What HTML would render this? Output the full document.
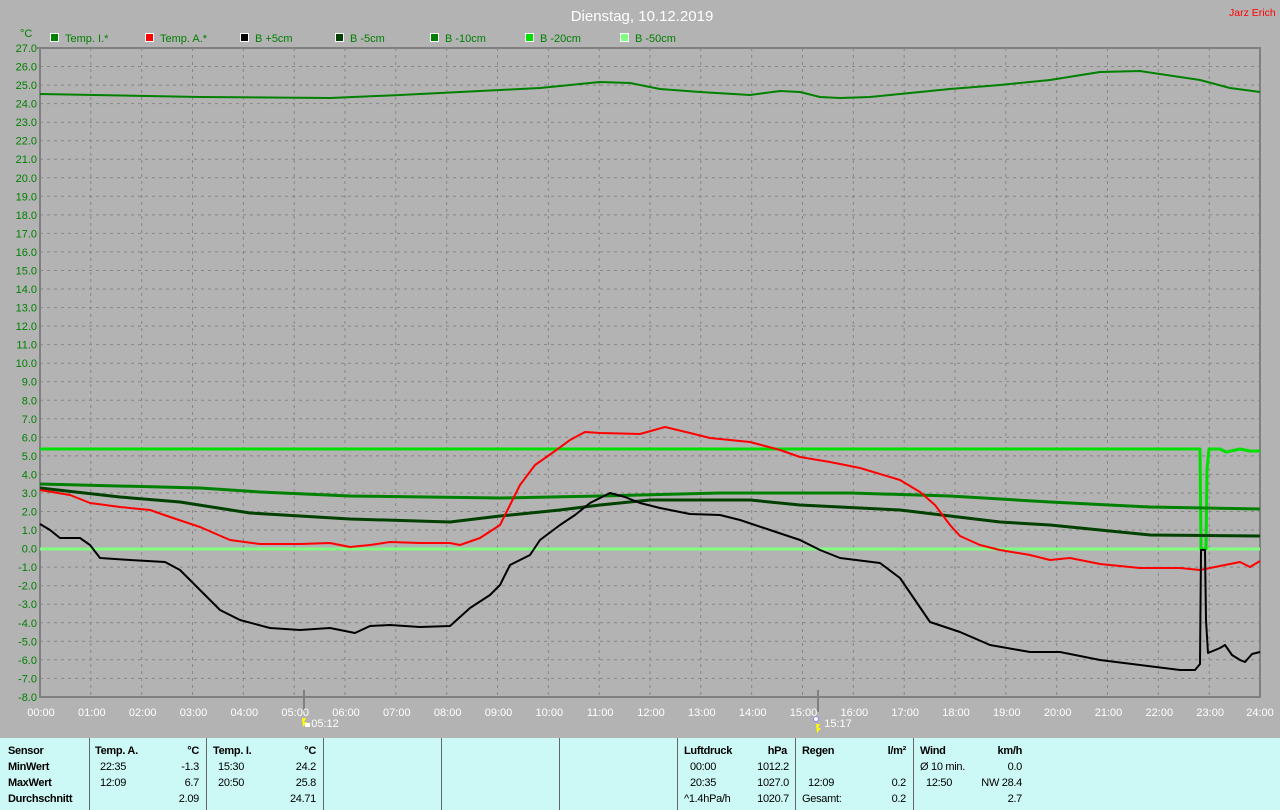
<!DOCTYPE html>
<html><head><meta charset="utf-8"><style>
html,body{margin:0;padding:0;width:1280px;height:810px;overflow:hidden;background:#b3b3b3;font-family:"Liberation Sans",sans-serif}
svg{position:absolute;left:0;top:0}
#tbl{position:absolute;left:0;top:738px;width:1280px;height:72px;background:#ccf9f5;font-size:11px;color:#000}
.d{position:absolute;top:0;width:1px;height:72px;background:#666}
.t{position:absolute;white-space:nowrap;letter-spacing:-0.3px}
.b{font-weight:bold}
</style></head><body>
<svg width="1280" height="738" font-family="Liberation Sans, sans-serif">
<text x="642" y="21" fill="#fff" font-size="15" text-anchor="middle">Dienstag, 10.12.2019</text>
<text x="1229" y="16" fill="#f00" font-size="10.5">Jarz Erich</text>
<text x="20" y="37" fill="#008000" font-size="11">°C</text>
<g font-size="11" fill="#008000">
<rect x="50.5" y="33.5" width="8" height="8" fill="#008000" stroke="#fff"/><text x="65" y="42">Temp. I.*</text>
<rect x="145.5" y="33.5" width="8" height="8" fill="#f00" stroke="#fff"/><text x="160" y="42">Temp. A.*</text>
<rect x="240.5" y="33.5" width="8" height="8" fill="#000" stroke="#fff"/><text x="255" y="42">B +5cm</text>
<rect x="335.5" y="33.5" width="8" height="8" fill="#004000" stroke="#fff"/><text x="350" y="42">B -5cm</text>
<rect x="430.5" y="33.5" width="8" height="8" fill="#008000" stroke="#fff"/><text x="445" y="42">B -10cm</text>
<rect x="525.5" y="33.5" width="8" height="8" fill="#00e000" stroke="#fff"/><text x="540" y="42">B -20cm</text>
<rect x="620.5" y="33.5" width="8" height="8" fill="#80ff80" stroke="#fff"/><text x="635" y="42">B -50cm</text>
</g>
<g stroke="#868686" stroke-width="1" stroke-dasharray="3,4" fill="none">
<path d="M40 66.5H1260M40 85.1H1260M40 103.6H1260M40 122.2H1260M40 140.7H1260M40 159.2H1260M40 177.8H1260M40 196.3H1260M40 214.9H1260M40 233.4H1260M40 251.9H1260M40 270.5H1260M40 289H1260M40 307.6H1260M40 326.1H1260M40 344.6H1260M40 363.2H1260M40 381.7H1260M40 400.3H1260M40 418.8H1260M40 437.3H1260M40 455.9H1260M40 474.4H1260M40 493H1260M40 511.5H1260M40 530H1260M40 548.6H1260M40 567.1H1260M40 585.7H1260M40 604.2H1260M40 622.8H1260M40 641.3H1260M40 659.8H1260M40 678.4H1260"/>
<path d="M90.8 48V697M141.7 48V697M192.5 48V697M243.3 48V697M294.2 48V697M345 48V697M395.8 48V697M446.7 48V697M497.5 48V697M548.3 48V697M599.2 48V697M650 48V697M700.8 48V697M751.7 48V697M802.5 48V697M853.3 48V697M904.2 48V697M955 48V697M1005.8 48V697M1056.7 48V697M1107.5 48V697M1158.3 48V697M1209.2 48V697"/>
</g>
<path d="M37 48H1260V697H40V48" stroke="#808080" stroke-width="2" fill="none"/>
<path d="M304 690V712M818 690V712" stroke="#808080" stroke-width="2"/>
<g font-size="11" fill="#008000" text-anchor="end">
<text x="37" y="52">27.0</text><text x="37" y="70.5">26.0</text><text x="37" y="89">25.0</text><text x="37" y="107.6">24.0</text><text x="37" y="126.2">23.0</text><text x="37" y="144.7">22.0</text><text x="37" y="163.2">21.0</text><text x="37" y="181.8">20.0</text><text x="37" y="200.3">19.0</text><text x="37" y="218.9">18.0</text><text x="37" y="237.4">17.0</text><text x="37" y="255.9">16.0</text><text x="37" y="274.5">15.0</text><text x="37" y="293">14.0</text><text x="37" y="311.6">13.0</text><text x="37" y="330.1">12.0</text><text x="37" y="348.6">11.0</text><text x="37" y="367.2">10.0</text><text x="37" y="385.7">9.0</text><text x="37" y="404.3">8.0</text><text x="37" y="422.8">7.0</text><text x="37" y="441.3">6.0</text><text x="37" y="459.9">5.0</text><text x="37" y="478.4">4.0</text><text x="37" y="497">3.0</text><text x="37" y="515.5">2.0</text><text x="37" y="534">1.0</text><text x="37" y="552.6">0.0</text><text x="37" y="571.1">-1.0</text><text x="37" y="589.7">-2.0</text><text x="37" y="608.2">-3.0</text><text x="37" y="626.8">-4.0</text><text x="37" y="645.3">-5.0</text><text x="37" y="663.8">-6.0</text><text x="37" y="682.4">-7.0</text><text x="37" y="701">-8.0</text>
</g>
<g font-size="11" fill="#fff" text-anchor="middle">
<text x="41" y="716">00:00</text><text x="91.8" y="716">01:00</text><text x="142.7" y="716">02:00</text><text x="193.5" y="716">03:00</text><text x="244.3" y="716">04:00</text><text x="295.2" y="716">05:00</text><text x="346" y="716">06:00</text><text x="396.8" y="716">07:00</text><text x="447.7" y="716">08:00</text><text x="498.5" y="716">09:00</text><text x="549.3" y="716">10:00</text><text x="600.2" y="716">11:00</text><text x="651" y="716">12:00</text><text x="701.8" y="716">13:00</text><text x="752.7" y="716">14:00</text><text x="803.5" y="716">15:00</text><text x="854.3" y="716">16:00</text><text x="905.2" y="716">17:00</text><text x="956" y="716">18:00</text><text x="1006.8" y="716">19:00</text><text x="1057.7" y="716">20:00</text><text x="1108.5" y="716">21:00</text><text x="1159.3" y="716">22:00</text><text x="1210.2" y="716">23:00</text><text x="1260" y="716">24:00</text>
<text x="325" y="727">05:12</text><text x="838" y="727">15:17</text>
</g>
<path d="M302 718l4 0-2 4 3 0-4 5z" fill="#ff0"/><rect x="305" y="723" width="5" height="4" fill="#fff"/>
<path d="M816 724l4 0-2 4 3 0-4 5z" fill="#ff0"/><circle cx="816" cy="719" r="2.5" fill="#fff" stroke="#88f"/>
<g fill="none" stroke-linejoin="round">
<polyline stroke="#80ff80" stroke-width="3" points="40,549 1260,549"/>
<polyline stroke="#00e000" stroke-width="3" points="40,449 1200,449 1201,549 1206,549 1207,470 1209,449 1220,449 1226,452 1240,449 1250,451 1260,451"/>
<polyline stroke="#008000" stroke-width="3" points="40,484 200,488 260,492 350,496 500,498 600,496 720,493 850,493 950,496 1050,502 1150,507 1260,509"/>
<polyline stroke="#004000" stroke-width="3" points="40,488 120,497 180,502 250,513 300,516 350,519 450,522 500,516 560,510 600,505 650,500 700,500 750,500 800,505 900,510 950,516 1000,522 1050,525 1100,530 1150,535 1260,536"/>
<polyline stroke="#008000" stroke-width="2" points="40,94 200,97 330,98 400,95 500,90 540,88 600,82 630,83 660,89 700,92 750,95 780,91 800,92 820,97 840,98 870,97 900,94 950,89 1000,85 1050,80 1100,72 1140,71 1200,80 1230,88 1260,92"/>
<polyline stroke="#f00" stroke-width="2" points="40,490 70,495 90,503 120,507 150,510 170,517 200,527 230,540 260,544 300,544 330,543 350,547 370,545 390,542 420,543 450,543 460,545 480,538 500,525 510,505 520,485 535,465 555,451 570,440 585,432 600,433 640,434 665,427 690,433 710,438 750,442 780,450 800,457 830,462 860,468 900,480 920,492 935,505 950,525 960,536 980,545 1000,550 1030,555 1050,560 1070,558 1100,564 1140,568 1180,568 1200,570 1220,566 1240,562 1250,567 1260,561"/>
<polyline stroke="#000" stroke-width="2" points="40,524 50,530 60,538 80,538 90,545 100,558 130,560 165,562 180,570 200,590 220,610 240,620 270,628 300,630 330,628 355,633 370,626 390,625 420,627 450,626 470,608 490,595 500,585 510,565 530,555 540,540 560,525 575,515 590,503 610,493 625,497 640,503 660,508 690,514 720,515 740,520 770,530 800,540 820,550 840,558 880,563 900,578 915,600 930,622 960,632 990,645 1030,652 1060,652 1100,660 1140,665 1180,670 1195,670 1200,664 1201,550 1205,550 1206,620 1208,653 1220,648 1225,645 1232,655 1240,660 1245,662 1252,654 1260,652"/>
</g>
</svg>
<div id="tbl">
<div class="d" style="left:89px"></div><div class="d" style="left:206px"></div><div class="d" style="left:323px"></div><div class="d" style="left:441px"></div><div class="d" style="left:559px"></div><div class="d" style="left:677px"></div><div class="d" style="left:795px"></div><div class="d" style="left:913px"></div>
<div class="t b" style="left:8px;top:7px">Sensor</div><div class="t b" style="left:8px;top:23px">MinWert</div><div class="t b" style="left:8px;top:39px">MaxWert</div><div class="t b" style="left:8px;top:55px">Durchschnitt</div>
<div class="t b" style="left:95px;top:7px">Temp. A.</div><div class="t b" style="right:1081px;top:7px">°C</div>
<div class="t" style="left:100px;top:23px">22:35</div><div class="t" style="right:1081px;top:23px">-1.3</div>
<div class="t" style="left:100px;top:39px">12:09</div><div class="t" style="right:1081px;top:39px">6.7</div>
<div class="t" style="right:1081px;top:55px">2.09</div>
<div class="t b" style="left:213px;top:7px">Temp. I.</div><div class="t b" style="right:964px;top:7px">°C</div>
<div class="t" style="left:218px;top:23px">15:30</div><div class="t" style="right:964px;top:23px">24.2</div>
<div class="t" style="left:218px;top:39px">20:50</div><div class="t" style="right:964px;top:39px">25.8</div>
<div class="t" style="right:964px;top:55px">24.71</div>
<div class="t b" style="left:684px;top:7px">Luftdruck</div><div class="t b" style="right:493px;top:7px">hPa</div>
<div class="t" style="left:690px;top:23px">00:00</div><div class="t" style="right:491px;top:23px">1012.2</div>
<div class="t" style="left:690px;top:39px">20:35</div><div class="t" style="right:491px;top:39px">1027.0</div>
<div class="t" style="left:684px;top:55px">^1.4hPa/h</div><div class="t" style="right:491px;top:55px">1020.7</div>
<div class="t b" style="left:802px;top:7px">Regen</div><div class="t b" style="right:374px;top:7px">l/m²</div>
<div class="t" style="left:808px;top:39px">12:09</div><div class="t" style="right:374px;top:39px">0.2</div>
<div class="t" style="left:802px;top:55px">Gesamt:</div><div class="t" style="right:374px;top:55px">0.2</div>
<div class="t b" style="left:920px;top:7px">Wind</div><div class="t b" style="right:258px;top:7px">km/h</div>
<div class="t" style="left:920px;top:23px">Ø 10 min.</div><div class="t" style="right:258px;top:23px">0.0</div>
<div class="t" style="left:926px;top:39px">12:50</div><div class="t" style="right:258px;top:39px">NW 28.4</div>
<div class="t" style="right:258px;top:55px">2.7</div>
</div>
</body></html>
